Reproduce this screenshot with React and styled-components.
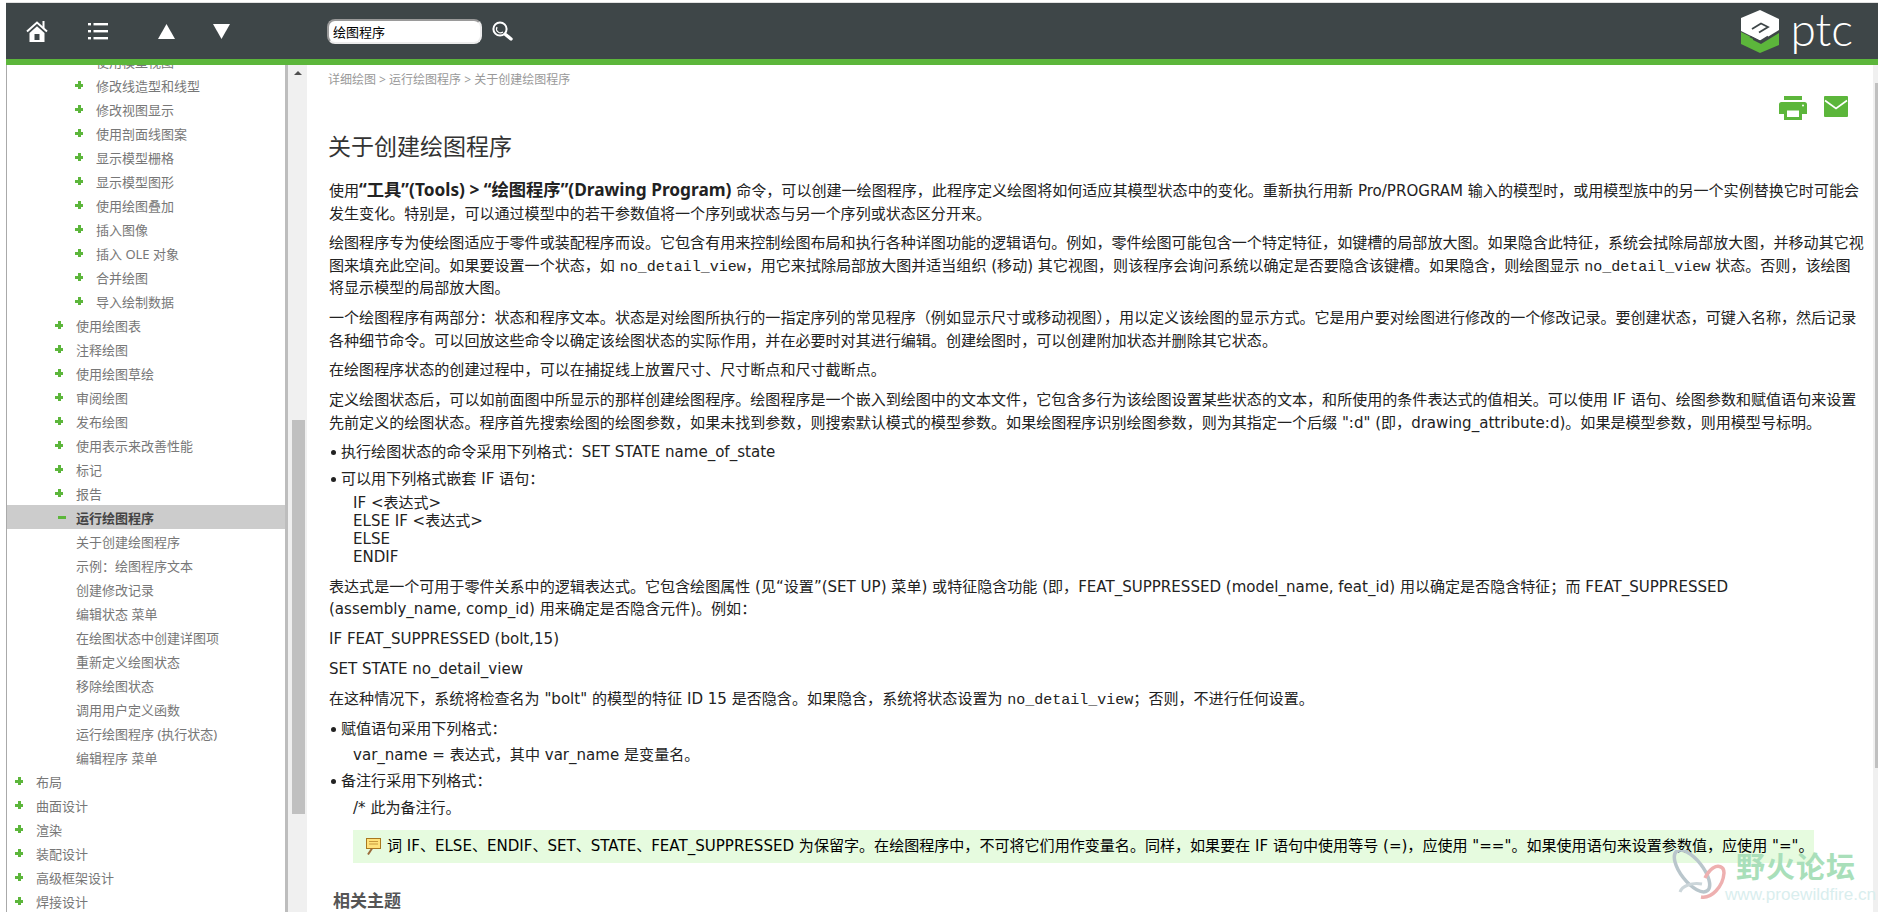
import styled, { createGlobalStyle } from "styled-components";

const GREEN = "#5cb63b";
const UI_FONT = `"Noto Sans", "Noto Sans CJK SC", sans-serif`;
const BODY_FONT = `"DejaVu Sans", "Noto Sans CJK SC", sans-serif`;

const TREE = [
    [3, "使用模型视图", "plus"],
    [3, "修改线造型和线型", "plus"],
    [3, "修改视图显示", "plus"],
    [3, "使用剖面线图案", "plus"],
    [3, "显示模型栅格", "plus"],
    [3, "显示模型图形", "plus"],
    [3, "使用绘图叠加", "plus"],
    [3, "插入图像", "plus"],
    [3, "插入 OLE 对象", "plus"],
    [3, "合并绘图", "plus"],
    [3, "导入绘制数据", "plus"],
    [2, "使用绘图表", "plus"],
    [2, "注释绘图", "plus"],
    [2, "使用绘图草绘", "plus"],
    [2, "审阅绘图", "plus"],
    [2, "发布绘图", "plus"],
    [2, "使用表示来改善性能", "plus"],
    [2, "标记", "plus"],
    [2, "报告", "plus"],
    [2, "运行绘图程序", "minus"],
    [2, "关于创建绘图程序"],
    [2, "示例：绘图程序文本"],
    [2, "创建修改记录"],
    [2, "编辑状态 菜单"],
    [2, "在绘图状态中创建详图项"],
    [2, "重新定义绘图状态"],
    [2, "移除绘图状态"],
    [2, "调用用户定义函数"],
    [2, "运行绘图程序 (执行状态)"],
    [2, "编辑程序 菜单"],
    [0, "布局", "plus"],
    [0, "曲面设计", "plus"],
    [0, "渲染", "plus"],
    [0, "装配设计", "plus"],
    [0, "高级框架设计", "plus"],
    [0, "焊接设计", "plus"],
];

export default function App() {
    return (
        <Page>
            <GlobalStyle />
            <Header>
                <NavButton $left={20} aria-label="home">
                    <svg width="22" height="21" viewBox="0 0 22 21">
                        <path d="M1 10.5 11 1.5l10 9" fill="none" stroke="#fff" strokeWidth="2" />
                        <rect x="16.5" y="0" width="2" height="7" fill="#fff" />
                        <path d="M3.5 12 11 5.2l7.5 6.8V21h-15Z" fill="#fff" />
                        <rect x="8.5" y="13" width="5" height="6" fill="#3e4648" />
                    </svg>
                </NavButton>
                <NavButton $left={40} aria-label="contents">
                    <svg width="20" height="17" viewBox="0 0 20 17" fill="#fff">
                        <rect x="0" y="0" width="3" height="2.4" />
                        <rect x="5.5" y="0" width="14.5" height="2.4" />
                        <rect x="0" y="7" width="3" height="2.4" />
                        <rect x="5.5" y="7" width="14.5" height="2.4" />
                        <rect x="0" y="14" width="3" height="2.4" />
                        <rect x="5.5" y="14" width="14.5" height="2.4" />
                    </svg>
                </NavButton>
                <NavButton $left={50} aria-label="previous">
                    <svg width="17" height="15" viewBox="0 0 17 15"><path d="M8.5 0 17 15H0Z" fill="#fff" /></svg>
                </NavButton>
                <NavButton $left={38} aria-label="next">
                    <svg width="17" height="15" viewBox="0 0 17 15"><path d="M0 0h17L8.5 15Z" fill="#fff" /></svg>
                </NavButton>
                <SearchInput defaultValue="绘图程序" />
                <SearchButton aria-label="search">
                    <svg width="21" height="20" viewBox="0 0 21 20" fill="none" stroke="#fff">
                        <circle cx="8" cy="8" r="6.6" strokeWidth="2" />
                        <path d="M5 6a4 4 0 0 0 6 5" strokeWidth="1.2" />
                        <path d="m13.5 13.5 5.5 4.5" strokeWidth="3.4" strokeLinecap="round" />
                    </svg>
                </SearchButton>
                <Logo>
                    <svg width="38" height="43" viewBox="0 0 38 43">
                        <path d="M0 8 19 0l19 9v11L20 31 0 21Z" fill="#fff" />
                        <path d="M11 19 20 13.500l7 3.500-9 5.500" fill="none" stroke="#3e4648" strokeWidth="1.800" />
                        <path d="M0 22 12 28v2l8 4 18-11v12L19 43 0 34Z" fill={GREEN} />
                        <path d="m9 26.500 10 5 8-5" fill="none" stroke="#3e4648" strokeWidth="1.800" />
                    </svg>
                    <LogoText>ptc</LogoText>
                </Logo>
            </Header>

            <Body>
                <Sidebar>
                    <TreeList>
                        {TREE.map(([level, label, toggle]) => (
                            <TreeRow key={label} $level={level} $active={toggle === "minus"}>
                                <Toggle $kind={toggle} />
                                {label}
                            </TreeRow>
                        ))}
                    </TreeList>
                </Sidebar>
                <SideScroll>
                    <ScrollArrow />
                    <SideThumb />
                </SideScroll>

                <Main>
                    <Breadcrumb>详细绘图 &gt; 运行绘图程序 &gt; 关于创建绘图程序</Breadcrumb>
                    <Actions>
                        <svg width="28" height="24" viewBox="0 0 28 24" fill={GREEN}>
                            <rect x="5" y="0" width="18" height="4" />
                            <path fillRule="evenodd" d="M2.500 6h23A2.500 2.500 0 0 1 28 8.500V18h-5v6H5v-6H0V8.500A2.500 2.500 0 0 1 2.500 6ZM8 14.500v6.500h12v-6.500Z" />
                            <circle cx="24" cy="9.500" r="1" fill="#fff" />
                        </svg>
                        <svg width="24" height="21" viewBox="0 0 24 21">
                            <rect width="24" height="21" rx="1" fill={GREEN} />
                            <path d="m1 4.500 11 8 11-8" fill="none" stroke="#fff" strokeWidth="1.600" />
                        </svg>
                    </Actions>
                    <Heading>关于创建绘图程序</Heading>

                    <Para>
                        使用<Strong>“工具”(Tools) &gt; “绘图程序”(Drawing Program)</Strong> 命令，可以创建一绘图程序，此程序定义绘图将如何适应其模型状态中的变化。重新执行用新 Pro/PROGRAM 输入的模型时，或用模型族中的另一个实例替换它时可能会<br />
                        发生变化。特别是，可以通过模型中的若干参数值将一个序列或状态与另一个序列或状态区分开来。
                    </Para>
                    <Para>
                        绘图程序专为使绘图适应于零件或装配程序而设。它包含有用来控制绘图布局和执行各种详图功能的逻辑语句。例如，零件绘图可能包含一个特定特征，如键槽的局部放大图。如果隐含此特征，系统会拭除局部放大图，并移动其它视<br />
                        图来填充此空间。如果要设置一个状态，如 <Code>no_detail_view</Code>，用它来拭除局部放大图并适当组织 (移动) 其它视图，则该程序会询问系统以确定是否要隐含该键槽。如果隐含，则绘图显示 <Code>no_detail_view</Code> 状态。否则，该绘图<br />
                        将显示模型的局部放大图。
                    </Para>
                    <Para>
                        一个绘图程序有两部分：状态和程序文本。状态是对绘图所执行的一指定序列的常见程序（例如显示尺寸或移动视图），用以定义该绘图的显示方式。它是用户要对绘图进行修改的一个修改记录。要创建状态，可键入名称，然后记录<br />
                        各种细节命令。可以回放这些命令以确定该绘图状态的实际作用，并在必要时对其进行编辑。创建绘图时，可以创建附加状态并删除其它状态。
                    </Para>
                    <Para>在绘图程序状态的创建过程中，可以在捕捉线上放置尺寸、尺寸断点和尺寸截断点。</Para>
                    <Para>
                        定义绘图状态后，可以如前面图中所显示的那样创建绘图程序。绘图程序是一个嵌入到绘图中的文本文件，它包含多行为该绘图设置某些状态的文本，和所使用的条件表达式的值相关。可以使用 IF 语句、绘图参数和赋值语句来设置<br />
                        先前定义的绘图状态。程序首先搜索绘图的绘图参数，如果未找到参数，则搜索默认模式的模型参数。如果绘图程序识别绘图参数，则为其指定一个后缀 ":d" (即，drawing_attribute:d)。如果是模型参数，则用模型号标明。
                    </Para>
                    <Bullet>执行绘图状态的命令采用下列格式：SET STATE name_of_state</Bullet>
                    <Bullet>可以用下列格式嵌套 IF 语句：</Bullet>
                    <Snippet>
                        IF &lt;表达式&gt;<br />
                        ELSE IF &lt;表达式&gt;<br />
                        ELSE<br />
                        ENDIF
                    </Snippet>
                    <Para>
                        表达式是一个可用于零件关系中的逻辑表达式。它包含绘图属性 (见“设置”(SET UP) 菜单) 或特征隐含功能 (即，FEAT_SUPPRESSED (model_name, feat_id) 用以确定是否隐含特征；而 FEAT_SUPPRESSED<br />
                        (assembly_name, comp_id) 用来确定是否隐含元件)。例如：
                    </Para>
                    <Para>IF FEAT_SUPPRESSED (bolt,15)</Para>
                    <Para>SET STATE no_detail_view</Para>
                    <Para>
                        在这种情况下，系统将检查名为 "bolt" 的模型的特征 ID 15 是否隐含。如果隐含，系统将状态设置为 <Code>no_detail_view</Code>；否则，不进行任何设置。
                    </Para>
                    <Bullet>赋值语句采用下列格式：</Bullet>
                    <Indented>var_name = 表达式，其中 var_name 是变量名。</Indented>
                    <Bullet>备注行采用下列格式：</Bullet>
                    <Indented>/* 此为备注行。</Indented>
                    <Note>
                        <svg width="15" height="17" viewBox="0 0 15 17">
                            <rect x="0.500" y="0.500" width="14" height="10" fill="#ffe27a" stroke="#a9781f" />
                            <path d="M3 3.500h9M3 6h9" stroke="#c89a3c" />
                            <path d="m6 10.500-4 6" stroke="#9a6a3a" strokeWidth="2" />
                        </svg>
                        词 IF、ELSE、ENDIF、SET、STATE、FEAT_SUPPRESSED 为保留字。在绘图程序中，不可将它们用作变量名。同样，如果要在 IF 语句中使用等号 (=)，应使用 "=="。如果使用语句来设置参数值，应使用 "="。
                    </Note>
                    <Related>相关主题</Related>
                </Main>

                <MainScroll>
                    <MainThumb />
                </MainScroll>
            </Body>

            <Watermark>
                <svg width="58" height="54" viewBox="0 0 58 54" fill="none">
                    <ellipse cx="24" cy="21" rx="11" ry="25" transform="rotate(-38 24 21)" stroke="#b9c6cc" strokeWidth="3.500" />
                    <path d="M33 47c10 2 22-10 23-24 0-7-6-8-11-5-3 2-6 6-8 10" stroke="#eeb0b0" strokeWidth="3.500" />
                    <path d="M12 42c2-6 12-10 22-8" stroke="#ccd6da" strokeWidth="3" />
                </svg>
                <WatermarkText>
                    <WatermarkTitle>野火论坛</WatermarkTitle>
                    <WatermarkUrl>www.proewildfire.cn</WatermarkUrl>
                </WatermarkText>
            </Watermark>
        </Page>
    );
}

const GlobalStyle = createGlobalStyle`
    html, body {
        margin : 0;
        padding : 0;
        background : #fff;
    }
`;

const Page = styled.div`
    position : relative;
    display : flex;
    flex-direction : column;
    height : 100vh;
    padding : 2px 0 0 6px;
    box-sizing : border-box;
    overflow : hidden;
    font-family : ${UI_FONT};
`;

const Header = styled.div`
    display : flex;
    align-items : center;
    flex : none;
    height : 56px;
    border-top : 1px solid #e2e2e2;
    border-bottom : 6px solid ${GREEN};
    background : #3e4648;
`;

const NavButton = styled.div`
    display : flex;
    margin-left : ${(p) => p.$left}px;
`;

const SearchInput = styled.input`
    width : 155px;
    height : 25px;
    margin-left : 97px;
    padding : 0 4px;
    box-sizing : border-box;
    border : 2px solid #ececec;
    border-top-color : #9a9a9a;
    border-left-color : #9a9a9a;
    border-radius : 8px;
    font-family : ${UI_FONT};
    font-size : 13px;
    color : #000;
    outline : none;
`;

const SearchButton = styled.div`
    display : flex;
    margin-left : 10px;
`;

const Logo = styled.div`
    display : flex;
    align-items : center;
    gap : 12px;
    margin-left : auto;
    padding-right : 25px;
`;

const LogoText = styled.span`
    margin-bottom : 6px;
    font-family : Lato, sans-serif;
    font-weight : 300;
    font-size : 46px;
    line-height : 43px;
    color : #fff;
`;

const Body = styled.div`
    display : flex;
    flex : 1;
    min-height : 0;
`;

const Sidebar = styled.div`
    flex : none;
    width : 278px;
    border-left : 1px solid #aaa;
    border-right : 3px solid #bdbdbd;
    overflow : hidden;
`;

const TreeList = styled.div`
    margin-top : -16px;
`;

const TreeRow = styled.div`
    display : flex;
    align-items : center;
    height : 24px;
    padding-left : ${(p) => p.$level * 20 + 8}px;
    background : ${(p) => (p.$active ? "#cccccc" : "transparent")};
    font-size : 13px;
    font-weight : ${(p) => (p.$active ? 700 : 400)};
    color : ${(p) => (p.$active ? "#444" : "#777")};
    white-space : nowrap;
`;

const Toggle = styled.span`
    position : relative;
    flex : none;
    width : 21px;
    height : 8px;

    &::before {
        content : "";
        display : ${(p) => (p.$kind ? "block" : "none")};
        position : absolute;
        top : 3px;
        left : ${(p) => (p.$kind === "minus" ? 3 : 0)}px;
        width : 8px;
        height : 2.5px;
        background : ${GREEN};
    }

    &::after {
        content : "";
        display : ${(p) => (p.$kind === "plus" ? "block" : "none")};
        position : absolute;
        top : 0;
        left : 3px;
        width : 2.5px;
        height : 8px;
        background : ${GREEN};
    }
`;

const SideScroll = styled.div`
    flex : none;
    width : 19px;
    background : #f0f0f0;
`;

const ScrollArrow = styled.div`
    width : 0;
    height : 0;
    margin : 6px 0 0 6px;
    border-left : 4px solid transparent;
    border-right : 4px solid transparent;
    border-bottom : 4px solid #505050;
`;

const SideThumb = styled.div`
    width : 13px;
    height : 394px;
    margin : 345px 0 0 4px;
    background : #c0c0c0;
`;

const Main = styled.div`
    flex : 1;
    min-width : 0;
    padding-left : 22px;
    overflow : hidden;
    font-family : ${BODY_FONT};
    font-size : 15.050px;
    line-height : 22.500px;
    color : #222;
    white-space : nowrap;
`;

const Breadcrumb = styled.div`
    height : 30px;
    margin-left : -1px;
    font-family : ${UI_FONT};
    font-size : 12px;
    line-height : 30px;
    color : #999;
`;

const Actions = styled.div`
    display : flex;
    justify-content : flex-end;
    align-items : flex-start;
    gap : 17px;
    height : 24px;
    margin-top : 1px;
    padding-right : 25px;
`;

const Heading = styled.h1`
    margin : 10px 0 18px -1px;
    font-family : ${UI_FONT};
    font-size : 23px;
    font-weight : 400;
    line-height : 32px;
    color : #333;
`;

const Para = styled.p`
    margin : 0 0 7.300px;
`;

const Strong = styled.strong`
    font-family : ${UI_FONT};
    font-size : 17.300px;
    font-weight : 700;
    line-height : 1;
`;

const Code = styled.code`
    font-family : "Liberation Mono", monospace;
    font-size : 15px;
    line-height : 1;
`;

const Bullet = styled.div`
    position : relative;
    margin-bottom : 4px;
    padding-left : 12px;

    &::before {
        content : "";
        position : absolute;
        top : 9px;
        left : 2px;
        width : 5px;
        height : 5px;
        border-radius : 50%;
        background : #222;
    }
`;

const Indented = styled.div`
    margin-bottom : 3.500px;
    padding-left : 24px;
`;

const Snippet = styled.div`
    margin-bottom : 9.500px;
    padding-left : 24px;
    line-height : 18px;
`;

const Note = styled.div`
    display : flex;
    align-items : center;
    gap : 6px;
    box-sizing : border-box;
    width : 1461px;
    height : 33px;
    margin : 11px 0 26px 24px;
    padding-left : 13px;
    background : #e6fbdf;
    color : #000;
`;

const Related = styled.h3`
    margin : 0 0 0 4px;
    font-family : ${UI_FONT};
    font-size : 17px;
    font-weight : 700;
    line-height : 24px;
    color : #555;
`;

const MainScroll = styled.div`
    flex : none;
    width : 5px;
    background : #f0f0f0;
`;

const MainThumb = styled.div`
    height : 685px;
    margin : 18px 0 0 2px;
    background : #c0c0c0;
`;

const Watermark = styled.div`
    position : absolute;
    top : 850px;
    left : 1668px;
    display : flex;
    gap : 12px;
    pointer-events : none;
`;

const WatermarkText = styled.div`
    display : flex;
    flex-direction : column;
    margin-left : -4px;
`;

const WatermarkTitle = styled.div`
    padding-left : 2px;
    font-size : 29px;
    font-weight : 700;
    line-height : 34px;
    letter-spacing : 1px;
    color : #a9dfba;
`;

const WatermarkUrl = styled.div`
    margin : 1px 0 0 -9px;
    font-family : "Liberation Sans", sans-serif;
    font-size : 17.100px;
    line-height : 20px;
    color : #d9eeee;
`;
